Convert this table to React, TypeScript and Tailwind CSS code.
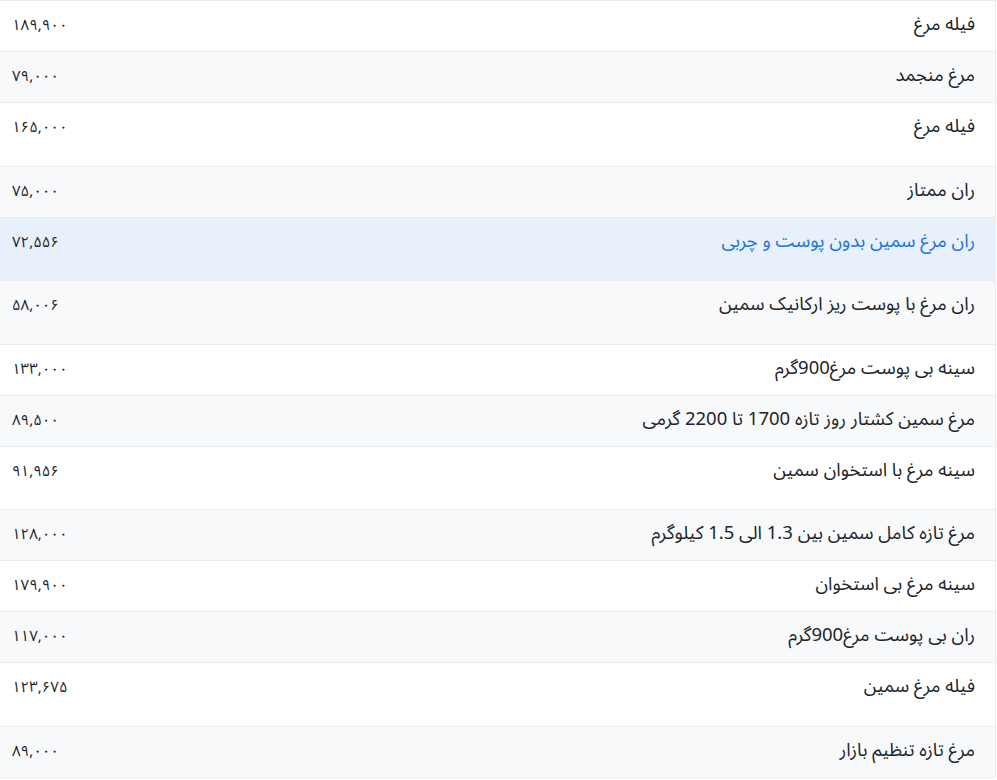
const rows: { name: string; price: string; tall?: boolean }[] = [
  { name: "فیله مرغ", price: "۱۸۹,۹۰۰" },
  { name: "مرغ منجمد", price: "۷۹,۰۰۰" },
  { name: "فیله مرغ", price: "۱۶۵,۰۰۰", tall: true },
  { name: "ران ممتاز", price: "۷۵,۰۰۰" },
  { name: "ران مرغ سمین بدون پوست و چربی", price: "۷۲,۵۵۶", tall: true },
  { name: "ران مرغ با پوست ریز ارکانیک سمین", price: "۵۸,۰۰۶", tall: true },
  { name: "سینه بی پوست مرغ900گرم", price: "۱۳۳,۰۰۰" },
  { name: "مرغ سمین کشتار روز تازه 1700 تا 2200 گرمی", price: "۸۹,۵۰۰" },
  { name: "سینه مرغ با استخوان سمین", price: "۹۱,۹۵۶", tall: true },
  { name: "مرغ تازه کامل سمین بین 1.3 الی 1.5 کیلوگرم", price: "۱۲۸,۰۰۰" },
  { name: "سینه مرغ بی استخوان", price: "۱۷۹,۹۰۰" },
  { name: "ران بی پوست مرغ900گرم", price: "۱۱۷,۰۰۰" },
  { name: "فیله مرغ سمین", price: "۱۲۳,۶۷۵", tall: true },
  { name: "مرغ تازه تنظیم بازار", price: "۸۹,۰۰۰" },
];

export default function App() {
  return (
    <div className="min-h-[780px] bg-white">
      <div
        dir="rtl"
        className="w-[996px] border-r border-[#e9ecef] text-[#212529]"
        style={{ fontFamily: '"Noto Sans Arabic", "Noto Sans", sans-serif' }}
      >
        {rows.map((r, i) => {
          const hovered = i === 4;
          const bg = hovered ? "bg-[#e8f0fb]" : i % 2 === 1 ? "bg-[#f8f9fa]" : "bg-white";
          const h = i === 0 ? "h-[52px] border-t" : r.tall ? "h-[63.5px]" : "h-[51px]";
          return (
            <div key={i} className={`flex items-start border-b border-[#e9ecef] ${bg} ${h}`}>
              <div
                className={`flex-1 pr-5 pt-[12px] text-[18.5px] leading-6 ${hovered ? "text-[#1a73e8]" : ""}`}
              >
                {r.name}
              </div>
              <div className="w-[200px] pl-[12px] pt-[12px] text-left text-[15px] leading-6">{r.price}</div>
            </div>
          );
        })}
      </div>
    </div>
  );
}
